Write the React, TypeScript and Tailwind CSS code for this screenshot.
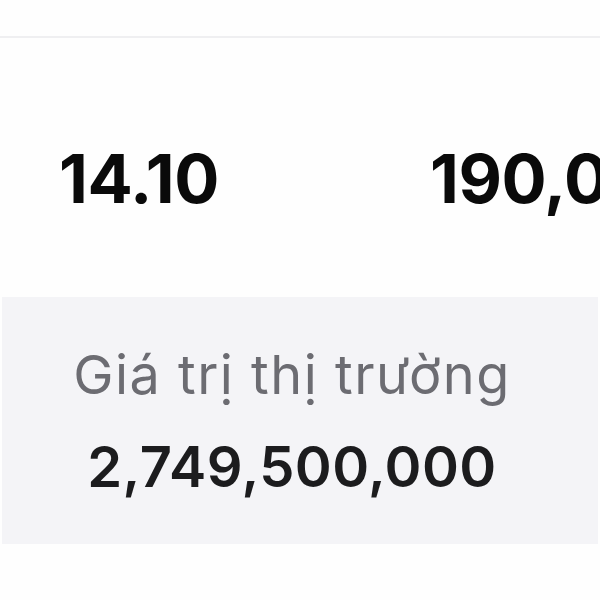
export default function App() {
  return (
    <div className="w-[600px] h-[600px] overflow-hidden bg-[#fefefe] font-['Inter','Noto_Sans',sans-serif]">
      <div className="h-[36px]" />
      <div className="h-[2px] bg-[#efeff1]" />
      <div className="h-[259px] flex items-center pt-[24px] whitespace-nowrap">
        <div className="shrink-0 pl-[59px] w-[430px] text-[67px] font-bold text-[#0a0a0a] tracking-[-0.5px]">14.10</div>
        <div className="shrink-0 text-[67px] font-bold text-[#0a0a0a] tracking-[-0.5px]">190,000</div>
      </div>
      <div className="mx-[2px] h-[247px] bg-[#f4f4f7] flex flex-col items-center pr-[16px] pt-[46px]">
        <div className="text-[54px] leading-[64px] text-[#6c6c72] tracking-[1.5px]">Giá trị thị trường</div>
        <div className="mt-[28px] text-[56px] leading-[64px] font-semibold text-[#1c1c1e] tracking-[0.4px]">2,749,500,000</div>
      </div>
    </div>
  );
}
